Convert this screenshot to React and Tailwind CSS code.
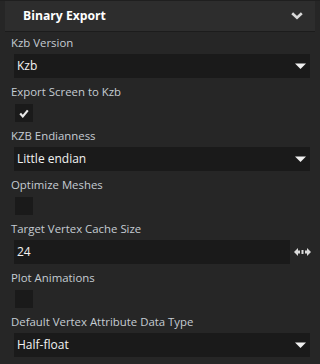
import React from "react";

const font = { fontFamily: '"Open Sans", "Noto Sans", sans-serif' };

function Label({ children }) {
  return (
    <div className="h-[22px] leading-[22px] pl-[11px] text-[11.4px] text-[#c5ccd3] whitespace-nowrap">
      {children}
    </div>
  );
}

function Dropdown({ value }) {
  return (
    <div className="ml-[14px] mr-[10px] h-[24px] bg-[#1a1a1a] flex items-center justify-between pl-[3px] pr-[4px]">
      <span className="text-[12px] text-[#f2f2f2]">{value}</span>
      <svg width="11" height="7" viewBox="0 0 11 7">
        <polygon points="0,0.5 11,0.5 5.5,6" fill="#f0f0f0" />
      </svg>
    </div>
  );
}

function Checkbox({ checked }) {
  return (
    <div className="ml-[15px] mt-px w-[18px] h-[18px] bg-[#1a1a1a] flex items-center justify-center">
      {checked && (
        <svg width="10" height="9" viewBox="0 0 10 9">
          <path d="M1.2 4.6 L3.8 7.4 L8.8 1.4" stroke="#e8e8e8" strokeWidth="2.2" fill="none" />
        </svg>
      )}
    </div>
  );
}

export default function App() {
  return (
    <div className="w-[320px] h-[364px] bg-[#262626] overflow-hidden" style={font}>
      <div className="h-px bg-[#1f1f1f]" />
      <div className="ml-[5px] mr-[5px] h-[31px] bg-[#2d2d2d] border-b border-[#1c1c1c] flex items-center justify-between pl-[18px] pr-[12px]">
        <span className="text-[12.2px] font-bold text-white">Binary Export</span>
        <svg width="12" height="8" viewBox="0 0 12 8">
          <path d="M1.2 1.2 L6 5.8 L10.8 1.2" stroke="#d8d8d8" strokeWidth="2.6" fill="none" />
        </svg>
      </div>
      <div className="flex flex-col gap-[3px]">
        <div className="flex flex-col">
          <Label>Kzb Version</Label>
          <Dropdown value="Kzb" />
        </div>
        <div className="flex flex-col">
          <Label>Export Screen to Kzb</Label>
          <Checkbox checked />
        </div>
        <div className="flex flex-col">
          <Label>KZB Endianness</Label>
          <Dropdown value="Little endian" />
        </div>
        <div className="flex flex-col">
          <Label>Optimize Meshes</Label>
          <Checkbox />
        </div>
        <div className="flex flex-col">
          <Label>Target Vertex Cache Size</Label>
          <div className="flex items-center">
            <div className="ml-[14px] w-[276px] h-[24px] bg-[#1a1a1a] flex items-center pl-[3px]">
              <span className="text-[12px] text-[#f2f2f2]">24</span>
            </div>
            <svg className="ml-[4px]" width="17" height="8" viewBox="0 0 17 8">
              <polygon points="0,4 4,0 4,8" fill="#dcdcdc" />
              <rect x="4" y="2.5" width="2" height="3" fill="#dcdcdc" />
              <rect x="7.5" y="2" width="2" height="4" fill="#dcdcdc" />
              <rect x="11" y="2.5" width="2" height="3" fill="#dcdcdc" />
              <polygon points="17,4 13,0 13,8" fill="#dcdcdc" />
            </svg>
          </div>
        </div>
        <div className="flex flex-col">
          <Label>Plot Animations</Label>
          <Checkbox />
        </div>
        <div className="flex flex-col">
          <Label>Default Vertex Attribute Data Type</Label>
          <Dropdown value="Half-float" />
        </div>
      </div>
    </div>
  );
}
